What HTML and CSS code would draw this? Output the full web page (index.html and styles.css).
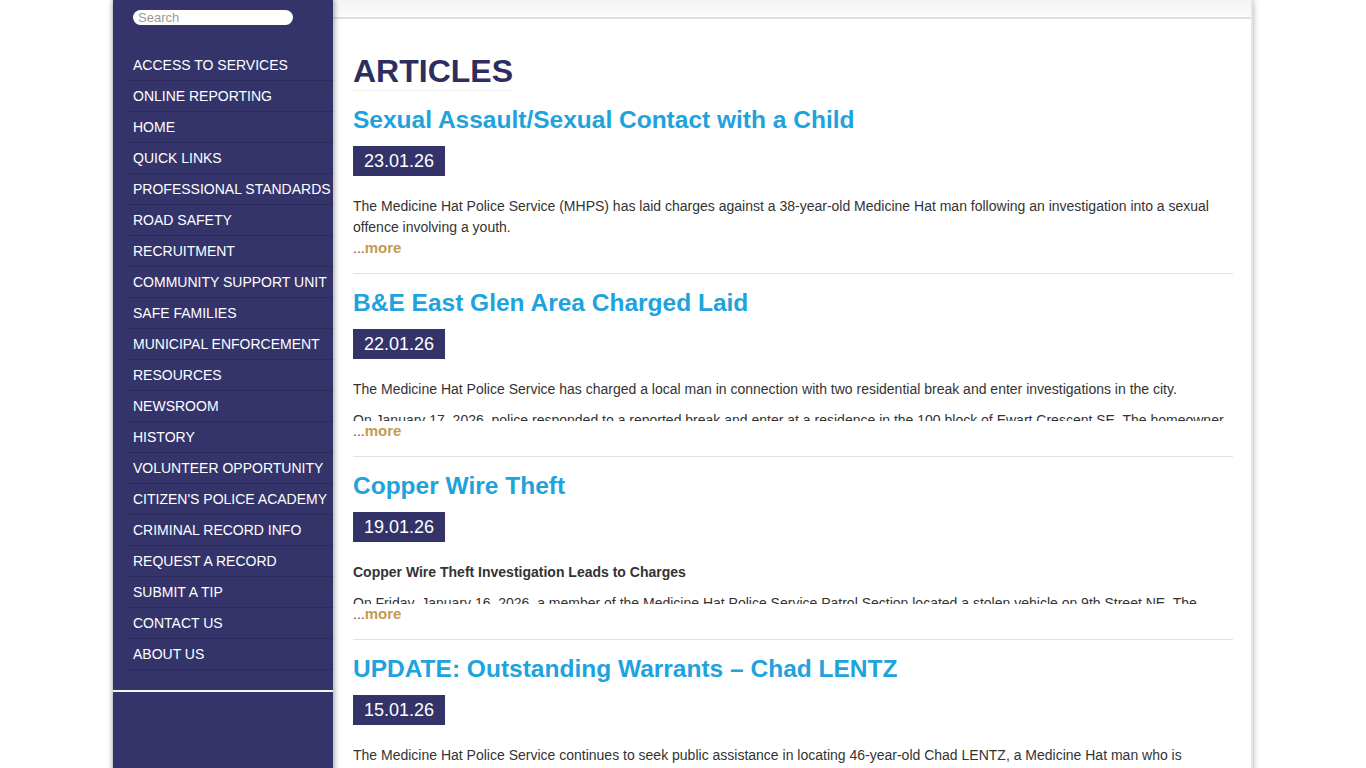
FILE: index.html
```html
<!DOCTYPE html>
<html lang="en">
<head>
<meta charset="utf-8">
<title>Articles</title>
<link rel="stylesheet" href="styles.css">
</head>
<body>
<div class="page">
  <aside class="sidebar">
    <div class="search"><input type="text" placeholder="Search"></div>
    <ul class="nav">
      <li><a href="#">ACCESS TO SERVICES</a></li>
      <li><a href="#">ONLINE REPORTING</a></li>
      <li><a href="#">HOME</a></li>
      <li><a href="#">QUICK LINKS</a></li>
      <li><a href="#">PROFESSIONAL STANDARDS</a></li>
      <li><a href="#">ROAD SAFETY</a></li>
      <li><a href="#">RECRUITMENT</a></li>
      <li><a href="#">COMMUNITY SUPPORT UNIT</a></li>
      <li><a href="#">SAFE FAMILIES</a></li>
      <li><a href="#">MUNICIPAL ENFORCEMENT</a></li>
      <li><a href="#">RESOURCES</a></li>
      <li><a href="#">NEWSROOM</a></li>
      <li><a href="#">HISTORY</a></li>
      <li><a href="#">VOLUNTEER OPPORTUNITY</a></li>
      <li><a href="#">CITIZEN'S POLICE ACADEMY</a></li>
      <li><a href="#">CRIMINAL RECORD INFO</a></li>
      <li><a href="#">REQUEST A RECORD</a></li>
      <li><a href="#">SUBMIT A TIP</a></li>
      <li><a href="#">CONTACT US</a></li>
      <li><a href="#">ABOUT US</a></li>
    </ul>
    <div class="side-rule"></div>
  </aside>
  <main class="main">
    <div class="topbar"></div>
    <div class="content">
      <h1 class="page-title">ARTICLES</h1>

      <article class="article">
        <h2 class="article-title"><a href="#">Sexual Assault/Sexual Contact with a Child</a></h2>
        <div class="date">23.01.26</div>
        <div class="excerpt">
          <p>The Medicine Hat Police Service (MHPS) has laid charges against a 38-year-old Medicine Hat man following an investigation into a sexual offence involving a youth.</p>
          <p>On January 21, 2026, the MHPS received a report of an incident involving a youth.</p>
        </div>
        <div class="more-line">...<a href="#" class="more">more</a></div>
      </article>

      <article class="article">
        <h2 class="article-title"><a href="#">B&amp;E East Glen Area Charged Laid</a></h2>
        <div class="date">22.01.26</div>
        <div class="excerpt">
          <p>The Medicine Hat Police Service has charged a local man in connection with two residential break and enter investigations in the city.</p>
          <p>On January 17, 2026, police responded to a reported break and enter at a residence in the 100 block of Ewart Crescent SE. The homeowner reported that items had been taken.</p>
        </div>
        <div class="more-line">...<a href="#" class="more">more</a></div>
      </article>

      <article class="article">
        <h2 class="article-title"><a href="#">Copper Wire Theft</a></h2>
        <div class="date">19.01.26</div>
        <div class="excerpt">
          <p><strong>Copper Wire Theft Investigation Leads to Charges</strong></p>
          <p>On Friday, January 16, 2026, a member of the Medicine Hat Police Service Patrol Section located a stolen vehicle on 9th Street NE. The vehicle was loaded with copper wire.</p>
        </div>
        <div class="more-line">...<a href="#" class="more">more</a></div>
      </article>

      <article class="article">
        <h2 class="article-title"><a href="#">UPDATE: Outstanding Warrants – Chad LENTZ</a></h2>
        <div class="date">15.01.26</div>
        <div class="excerpt">
          <p>The Medicine Hat Police Service continues to seek public assistance in locating 46-year-old Chad LENTZ, a Medicine Hat man who is wanted on multiple outstanding warrants.</p>
        </div>
        <div class="more-line">...<a href="#" class="more">more</a></div>
      </article>
    </div>
  </main>
</div>
</body>
</html>
```

FILE: styles.css
```css
html, body {
  margin: 0;
  padding: 0;
  background: #ffffff;
}

body {
  font-family: "Liberation Sans", Arial, sans-serif;
  color: #333333;
}

.page {
  width: 1140px;
  margin: 0 auto;
  min-height: 100vh;
  display: flex;
  box-shadow: 0 0 6px rgba(0, 0, 0, 0.35);
  background: #ffffff;
}

/* Sidebar */
.sidebar {
  width: 220px;
  flex: 0 0 220px;
  background: #34346b;
  box-shadow: 2px 0 5px rgba(0, 0, 0, 0.3);
  position: relative;
  z-index: 1;
  padding-top: 10px;
}

.search {
  padding-left: 20px;
  height: 15px;
}

.search input {
  display: block;
  box-sizing: border-box;
  width: 160px;
  height: 15px;
  border: none;
  border-radius: 8px;
  background: #ffffff;
  padding: 0 5px;
  font-family: "Liberation Sans", Arial, sans-serif;
  font-size: 13px;
  line-height: 15px;
  color: #333;
  outline: none;
}

.search input::placeholder {
  color: #9a9a9a;
}

.nav {
  list-style: none;
  margin: 25px 0 0 0;
  padding: 0;
}

.nav li {
  height: 30px;
  border-bottom: 1px solid #2b2b5e;
  margin-left: 12px;
}

.nav a {
  display: block;
  height: 30px;
  line-height: 30px;
  padding-left: 8px;
  color: #ffffff;
  text-decoration: none;
  font-size: 14px;
  white-space: nowrap;
}

.side-rule {
  margin-top: 20px;
  height: 2px;
  background: #f4f4f8;
}

/* Main */
.main {
  flex: 1;
  min-width: 0;
  background: #ffffff;
  border-right: 2px solid #e4e4e4;
}

.topbar {
  height: 17px;
  background: linear-gradient(#f4f4f4, #fbfbfb);
  border-bottom: 2px solid #dedede;
}

.content {
  padding: 34px 18px 0 20px;
}

.page-title {
  display: inline-block;
  margin: 0;
  font-size: 32px;
  line-height: 36px;
  font-weight: bold;
  color: #2e2e5e;
  padding-bottom: 1px;
  border-bottom: 1px solid #f0f0f0;
}

.article {
  margin-top: 14px;
  padding-bottom: 14px;
  border-bottom: 1px solid #e2e2e2;
}

.article-title {
  margin: 0;
  font-size: 24.5px;
  line-height: 30px;
  height: 30px;
  font-weight: bold;
  white-space: nowrap;
}

.article-title a {
  color: #20a3dc;
  text-decoration: none;
}

.date {
  display: inline-block;
  vertical-align: top;
  margin-top: 11px;
  height: 30px;
  line-height: 30px;
  padding: 0 11px;
  background: #33336a;
  color: #ffffff;
  font-size: 18px;
}

.excerpt {
  margin-top: 20px;
  height: 42px;
  overflow: hidden;
  font-size: 14px;
  line-height: 21px;
  padding-right: 7px;
}

.excerpt p {
  margin: 0 0 10px 0;
}

.excerpt strong {
  color: #333;
}

.more-line {
  height: 21px;
  font-size: 14px;
  line-height: 21px;
  color: #555;
  overflow: visible;
}

.more {
  color: #c49a52;
  font-weight: bold;
  font-size: 15px;
  line-height: 14px;
  text-decoration: none;
}
```
